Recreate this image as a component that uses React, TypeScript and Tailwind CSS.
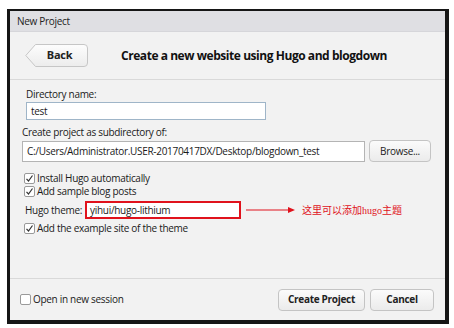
import React from 'react';

function Check({ on = true }: { on?: boolean }) {
  return (
    <span className="w-[11px] h-[11px] rounded-[2px] border border-[#9a9a9a] bg-white flex items-center justify-center shrink-0">
      {on && (
        <svg width="9" height="9" viewBox="0 0 9 9">
          <path d="M1.5 4.8 L3.5 7 L7.5 1.5" fill="none" stroke="#333" strokeWidth="1.2" />
        </svg>
      )}
    </span>
  );
}

function Btn({ children, className = '' }: { children: React.ReactNode; className?: string }) {
  return (
    <div
      className={`h-[22px] flex items-center justify-center rounded-[4px] border border-[#c4c4c4] bg-gradient-to-b from-[#fbfbfb] to-[#ebebeb] text-[#222] ${className}`}
    >
      {children}
    </div>
  );
}

export default function App() {
  return (
    <div className="w-[454px] h-[328px] bg-white overflow-hidden" style={{ fontFamily: '"Open Sans", "Noto Sans", sans-serif' }}>
      <div className="ml-[7px] mt-[9px] w-[442px] h-[315px] border-[#161616] border-t-2 border-l-[3px] border-r-4 border-b-4 bg-[#f2f2f2] flex flex-col text-[10px] tracking-[-0.3px] text-[#1a1a1a]">
        {/* title bar */}
        <div className="h-[21px] bg-[#dfdfe3] flex items-center pl-[7px] text-[#222] border-b border-[#d6d6da]">
          New Project
        </div>

        {/* header */}
        <div className="h-[48px] flex items-center pl-[15px] border-b border-[#d9d9d9] shrink-0">
          <div className="relative w-[63px] h-[23px] flex items-center justify-center">
            <svg className="absolute inset-0" width="63" height="23" viewBox="0 0 63 23">
              <defs>
                <linearGradient id="bk" x1="0" y1="0" x2="0" y2="1">
                  <stop offset="0" stopColor="#fdfdfd" />
                  <stop offset="1" stopColor="#ececec" />
                </linearGradient>
              </defs>
              <path d="M10.5 0.5 H59 Q62.5 0.5 62.5 4 V19 Q62.5 22.5 59 22.5 H10.5 L0.8 11.5 Z" fill="url(#bk)" stroke="#c6c6c6" />
            </svg>
            <span className="relative font-bold text-[11px] pl-[6px] text-[#222]">Back</span>
          </div>
          <div className="ml-[33px] font-bold text-[12px] tracking-[-0.45px] text-[#111]">Create a new website using Hugo and blogdown</div>
        </div>

        {/* body */}
        <div className="flex-1 flex flex-col pl-[12px]">
          <div className="pl-[4px] mt-[7px] leading-[15px]">Directory name:</div>
          <div className="ml-[4px] w-[240px] h-[18px] bg-white border border-[#9fb5c8] flex items-center pl-[4px] leading-none">test</div>
          <div className="mt-[5px] leading-[15px]">Create project as subdirectory of:</div>
          <div className="flex items-center gap-[4px] mt-[0px]">
            <div className="w-[343px] h-[21px] bg-white border border-[#b4b4b4] flex items-center pl-[4px] whitespace-nowrap overflow-hidden">
              C:/Users/Administrator.USER-20170417DX/Desktop/blogdown_test
            </div>
            <Btn className="w-[62px]">Browse...</Btn>
          </div>

          <div className="mt-[10px] flex flex-col pl-[2px]">
            <div className="flex items-center gap-[2px] h-[13px]">
              <Check />
              <span>Install Hugo automatically</span>
            </div>
            <div className="flex items-center gap-[2px] h-[13px]">
              <Check />
              <span>Add sample blog posts</span>
            </div>
            <div className="flex items-center h-[20px] mt-[2px] pl-[1px]">
              <span>Hugo theme:</span>
              <div className="ml-[3px] w-[156px] h-[18px] bg-white border-2 border-[#e0121c] flex items-center pl-[3px]">yihui/hugo-lithium</div>
              <svg className="ml-[5px]" width="50" height="8" viewBox="0 0 50 8">
                <line x1="0" y1="4" x2="44" y2="4" stroke="#e0121c" strokeWidth="1" />
                <path d="M42 1 L49 4 L42 7 Z" fill="#e0121c" />
              </svg>
              <span
                className="ml-[6px] text-[#e0121c] text-[10px] tracking-normal"
                style={{ fontFamily: '"Noto Sans CJK SC", "Noto Sans", sans-serif' }}
              >
                这里可以添加<span style={{ fontFamily: '"Liberation Serif", serif' }}>hugo</span>主题
              </span>
            </div>
            <div className="flex items-center gap-[2px] h-[13px] mt-[2px]">
              <Check />
              <span>Add the example site of the theme</span>
            </div>
          </div>
        </div>

        {/* footer */}
        <div className="h-[42px] border-t border-[#d9d9d9] flex items-center pl-[10px] pr-[11px] shrink-0">
          <div className="flex items-center gap-[2px]">
            <Check on={false} />
            <span>Open in new session</span>
          </div>
          <div className="ml-auto flex gap-[5px]">
            <Btn className="w-[87px] font-bold">Create Project</Btn>
            <Btn className="w-[64px] font-bold">Cancel</Btn>
          </div>
        </div>
      </div>
    </div>
  );
}
